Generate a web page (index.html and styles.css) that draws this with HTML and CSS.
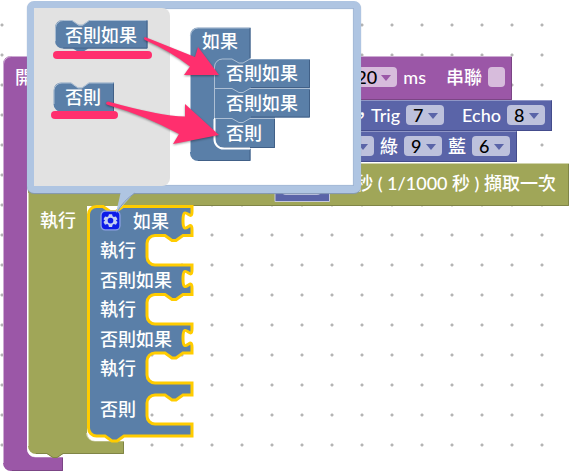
FILE: index.html
```html
<!DOCTYPE html>
<html lang="zh-Hant">
<head>
<meta charset="utf-8">
<title>積木工作區</title>
<link rel="stylesheet" href="styles.css">
</head>
<body>
<main class="workspace">

  <section class="block event">
    <svg class="shape" viewBox="3 55 510 417" aria-hidden="true">
      <path class="purple" d="M3 64a8 8 0 0 1 8-8H512V100H27V449a8 8 0 0 0 8 8H63V471H11a8 8 0 0 1-8-8Z"/>
      <path class="shine" d="M3.500 463V64a8 8 0 0 1 8-7.500H512M27.500 105V449a8 8 0 0 0 8 8H63"/>
      <path class="shade" d="M511.500 57V99.500H360M62.500 458V470.500H12"/>
    </svg>
    <div class="row event-row">
      <span class="start">開</span>
      <label class="field"><span class="pick wide"><select><option>20</option></select></span>ms</label>
      <label class="field chain">串聯<input type="checkbox"></label>
    </div>
  </section>

  <section class="block sonar">
    <div class="row">
      <label class="field">，Trig<span class="pick"><select><option>7</option></select></span></label>
      <label class="field echo">Echo<span class="pick"><select><option>8</option></select></span></label>
    </div>
  </section>

  <section class="block led">
    <div class="row">
      <label class="field"><span class="pick"><select aria-label="紅"><option></option></select></span></label>
      <label class="field">綠<span class="pick"><select><option>9</option></select></span></label>
      <label class="field">藍<span class="pick"><select><option>6</option></select></span></label>
    </div>
  </section>

  <section class="block timer">
    <svg class="shape" viewBox="28 162 541 297" aria-hidden="true">
      <path class="olive" d="M28 163H569V206H87V433a8 8 0 0 0 8 8H124V454H63l-6 4h-4l-6-4H36a8 8 0 0 1-8-8Z"/>
      <path class="shine" d="M28.500 446V193M86.500 433a8 8 0 0 0 8 8H124M360 163.500H569"/>
      <path class="olive-shade" d="M568.500 164V205.500H193M123.500 442V453.500H63l-6 4h-4l-6-4H36"/>
      <path class="indigo value" d="M275 185H329.500V201.500H275Z"/>
      <rect class="indigo-light" x="282" y="184" width="39" height="11" rx="4"/>
      <path class="indigo" d="M267 192h4l-2 2Z"/>
    </svg>
    <div class="row timer-row"><span>秒 ( 1/1000 秒 ) 擷取一次</span></div>
    <div class="do">執行</div>
  </section>

  <section class="block branch">
    <svg class="shape" viewBox="87 205 107 237" aria-hidden="true">
      <path class="blue selected" d="M88.500 215a8 8 0 0 1 8-8.500H103l7 5h6l7-5H192v5c0 12-9-9-9 9s9-3 9 9V235.500H183l-7 5h-4l-7-5H155a8 8 0 0 0-8 8V257a8 8 0 0 0 8 8H192v5c0 12-9-9-9 9s9-3 9 9V294.500H183l-7 5h-4l-7-5H155a8 8 0 0 0-8 8V316a8 8 0 0 0 8 8H192v5c0 12-9-9-9 9s9-3 9 9V353H183l-7 5h-4l-7-5H155a8 8 0 0 0-8 8V375a8 8 0 0 0 8 8H192V395H183l-7 5h-4l-7-5H155a8 8 0 0 0-8 8V416a8 8 0 0 0 8 8H192V436H124l-7 5h-5l-7-5H96.500a8 8 0 0 1-8-8Z"/>
    </svg>
    <ul class="inputs">
      <li class="value-input">
        <button class="gear" type="button" aria-label="設定">
          <svg viewBox="0 0 20 20" aria-hidden="true">
            <rect x="1" y="1" width="18" height="18" rx="4" fill="#0d1ce8" stroke="#8ea2e6" stroke-width="1.200"/>
            <path fill="#c5d0f2" fill-rule="evenodd" d="M8.500 4h3l.5 2 1.200.7 2-.6 1.500 2.600L15.200 10l1.500 1.400-1.500 2.600-2-.6-1.200.7-.5 2h-3l-.5-2-1.200-.7-2 .6-1.500-2.600L4.800 10 3.300 8.700l1.500-2.600 2 .6L8 6ZM10 7.400a2.700 2.700 0 1 0 0 5.400 2.700 2.700 0 0 0 0-5.400Z"/>
          </svg>
        </button>
        <span>如果</span>
      </li>
      <li class="statement-input">執行</li>
      <li class="value-input">否則如果</li>
      <li class="statement-input">執行</li>
      <li class="value-input">否則如果</li>
      <li class="statement-input">執行</li>
      <li class="statement-input last">否則</li>
    </ul>
  </section>

  <section class="bubble">
    <div class="flyout">
      <div class="mini elseif">
        <svg class="shape" viewBox="53 20 96 32" aria-hidden="true">
          <path class="blue" d="M61.500 20H71l7 5h4l7-5H149V49.500H88l-5 3H77l-5-3H62a8 8 0 0 1-8.500-8V28a8 8 0 0 1 8-8Z"/>
          <path class="shine" d="M54 42V28a8 8 0 0 1 8-7.500H71l7 5h4l7-5H148"/>
          <path class="blue-shade" d="M148.500 21V49H62"/>
        </svg>
        <span>否則如果</span>
      </div>
      <div class="mark mark-elseif"></div>
      <div class="mini else">
        <svg class="shape" viewBox="53 83 61 31" aria-hidden="true">
          <path class="blue" d="M61.500 83.500H71l7 5h4l7-5H114V113H62a8 8 0 0 1-8.500-8V91.500a8 8 0 0 1 8-8Z"/>
          <path class="shine" d="M54 105V91a8 8 0 0 1 8-7H71l7 5h4l7-5H113"/>
          <path class="blue-shade" d="M113.500 85V112"/>
        </svg>
        <span>否則</span>
      </div>
      <div class="mark mark-else"></div>
    </div>
    <div class="stack">
      <svg class="shape" viewBox="190 27 121 135" aria-hidden="true">
        <path class="blue" d="M198 27.500H250.500V161H198a8 8 0 0 1-8-8V35.500a8 8 0 0 1 8-8Z"/>
        <path class="white" d="M250.500 148.500H223a9 9 0 0 1-9-9V118H275V148.500Z"/>
        <path class="blue" d="M222 59H231l8 4h4l8-4H310V117.500H275V148H223a8 8 0 0 1-8-8V67a8 8 0 0 1 7-8Z"/>
        <path class="shine" d="M190.500 152V36a8 8 0 0 1 8-8H250M214.500 118V67a8 8 0 0 1 8-8H232l7 4h4l7-4H310M215 88.500H232l7 4h4l7-4H310M215 118.500H232l7 4h4l7-4H275"/>
        <path class="blue-shade" d="M250 28V58M309.500 60V87.500H251M309.500 90V117H251M274.500 119V147.500H224M250 149V160.500H198"/>
        <path class="rim" d="M214.500 119V139a9 9 0 0 0 9 9.500H250"/>
      </svg>
      <div class="parent">如果</div>
      <ol class="children">
        <li>否則如果</li>
        <li>否則如果</li>
        <li>否則</li>
      </ol>
    </div>
  </section>

  <svg class="pointers" viewBox="44 30 180 190" aria-hidden="true">
    <path class="tail" d="M121 191L116 213L136 191Z"/>
    <path class="tail-shade" d="M135 193Q124 200 117 212"/>
    <path class="arrow" d="M145 37Q143 38.500 145 40Q170 51 190 66.500L184 75H219L198 47L195 57Q170 47 145 37Z"/>
    <path class="arrow" d="M108 101.500Q104 103 108 105Q146 116 179 134L173 144L219 135L185 104V116.500Q160 116 108 101.500Z"/>
  </svg>
</main>
</body>
</html>
```
FILE: styles.css
```css
* {
  box-sizing: border-box;
}

body {
  margin: 0;
  background: #fff;
  color: #fff;
  font-family: Lato, "Noto Sans CJK TC", sans-serif;
  font-size: 18px;
  font-weight: 500;
  line-height: 24px;
}

/* Free canvas with a dotted grid */
.workspace {
  position: relative;
  min-height: 100vh;
  overflow: hidden;
  background-image: radial-gradient(circle, #b4b4b4 1px, transparent 2px);
  background-size: 30px 30px;
  background-position: -13px 10px;
}

.block,
.bubble {
  position: absolute;
}

.shape {
  position: absolute;
  inset: 0;
  z-index: -1;
  width: 100%;
  height: 100%;
  overflow: visible;
}

.block,
.mini,
.stack {
  isolation: isolate;
}

.purple { fill: #9b57a7; }
.indigo { fill: #5a64a8; }
.indigo-light { fill: #bdc1dc; }
.olive { fill: #a0a658; }
.blue { fill: #5a7fa8; }
.white { fill: #fff; }
.value { stroke: #c7cbd8; }
.selected {
  stroke: #fc0;
  stroke-width: 3px;
}
.shine,
.shade,
.olive-shade,
.blue-shade,
.rim {
  fill: none;
  stroke-width: 1px;
}
.shine { stroke: rgba(255, 255, 255, 0.5); }
.shade { stroke: #7b4585; }
.olive-shade { stroke: #808546; }
.blue-shade { stroke: #416087; }
.rim {
  stroke: #fff;
  stroke-width: 2px;
}

/* Rows of fields */
.row {
  display: flex;
  align-items: center;
  justify-content: flex-end;
  gap: 6px;
  height: 28px;
  padding-right: 6px;
  white-space: nowrap;
}

.field {
  display: flex;
  align-items: center;
  gap: 6px;
}

.pick {
  position: relative;
  display: flex;
  width: 38px;
}

.pick.wide {
  width: 48px;
}

.pick::after {
  content: "";
  position: absolute;
  top: 8px;
  right: 6px;
  border: 5px solid transparent;
  border-top: 6px solid #5a64a8;
  border-bottom: 0;
  pointer-events: none;
}

select {
  appearance: none;
  width: 100%;
  height: 20px;
  margin: 0;
  padding: 0 0 0 7px;
  border: 0;
  border-radius: 4px;
  background: #bdc1dc;
  color: #000;
  font: inherit;
  line-height: 20px;
}

input[type="checkbox"] {
  appearance: none;
  width: 17px;
  height: 20px;
  margin: 0;
  border-radius: 4px;
  background: #d7bcdc;
}

.event {
  left: 3px;
  top: 55px;
  width: 510px;
  height: 417px;
}

.event-row {
  height: 43px;
  padding-right: 8px;
}

.start {
  margin-right: auto;
  padding-left: 12px;
}

.event select {
  background: #d7bcdc;
}

.event .pick::after {
  border-top-color: #9b57a7;
}

.chain {
  margin-left: 14px;
}

.echo {
  margin-left: 12px;
}

.sonar,
.led {
  left: 28px;
  height: 31px;
  border: 1px solid #444c8c;
  border-top-color: #8f96c6;
  background: #5a64a8;
}

.sonar {
  top: 100px;
  width: 524px;
}

.led {
  top: 131px;
  width: 489px;
}

.timer {
  left: 28px;
  top: 162px;
  width: 541px;
  height: 297px;
}

.timer-row {
  height: 41px;
  padding-right: 13px;
}

.do {
  padding: 5px 12px;
}

.branch {
  left: 87px;
  top: 205px;
  width: 107px;
  height: 237px;
}

.inputs,
.children {
  margin: 0;
  padding: 0;
  list-style: none;
}

.inputs {
  padding: 1px 0 0 13px;
}

.value-input,
.statement-input {
  display: flex;
  align-items: center;
  gap: 12px;
  height: 29px;
  white-space: nowrap;
}

.statement-input {
  height: 30px;
}

.last {
  margin-top: 11px;
}

.gear {
  width: 21px;
  height: 21px;
  padding: 0;
  border: 0;
  background: none;
}

.gear svg {
  display: block;
}

/* Editor bubble */
.bubble {
  left: 27px;
  top: 1px;
  display: flex;
  gap: 20px;
  width: 334px;
  height: 192px;
  border: 7px solid #afc5e2;
  border-radius: 7px;
  background: #fff;
  box-shadow: inset 0 0 1px 1px #9db4d4, 0 1px 1px #8499b8;
}

.flyout {
  width: 136px;
  padding: 12px 0 0 19px;
  border-radius: 0 8px 8px 0;
  background: #e2e2e2;
}

.mini {
  position: relative;
  display: flex;
  align-items: center;
  height: 31px;
  padding: 0 0 2px 12px;
}

.elseif {
  width: 96px;
}

.else {
  width: 61px;
  margin-top: 23px;
}

.mark {
  position: relative;
  height: 8px;
  border-radius: 4px;
  background: #ff2f6e;
}

.mark-elseif {
  width: 99px;
}

.mark-else {
  width: 67px;
  margin-top: -2px;
  margin-left: -2px;
}

.stack {
  position: relative;
  width: 121px;
  height: 135px;
  margin-top: 19px;
}

.parent {
  height: 31px;
  padding: 2px 0 0 12px;
}

.children {
  padding-left: 36px;
}

.children li {
  height: 30px;
  line-height: 30px;
}

/* Arrows and the bubble's tail lie over the blocks */
.pointers {
  position: absolute;
  left: 44px;
  top: 30px;
  width: 180px;
  height: 190px;
  pointer-events: none;
}

.tail {
  fill: #afc5e2;
}

.tail-shade {
  fill: none;
  stroke: #8499b8;
}

.arrow {
  fill: #ff2f6e;
  filter: drop-shadow(0 1px 1px rgba(0, 0, 0, 0.4));
}
```
